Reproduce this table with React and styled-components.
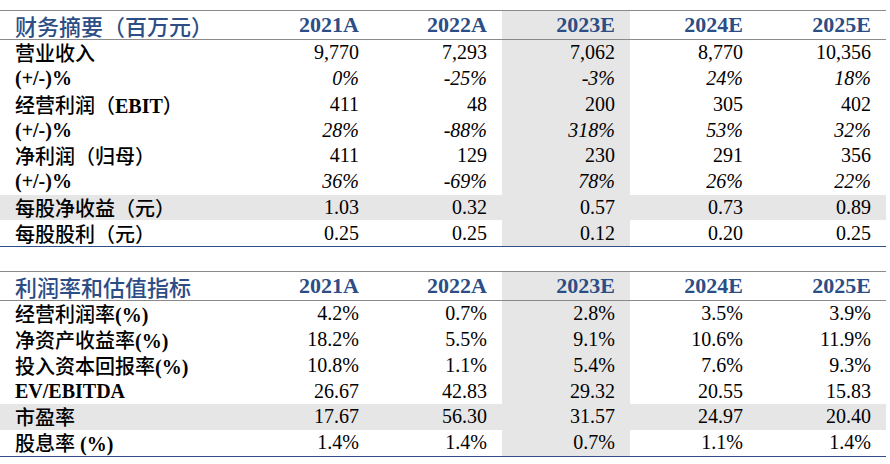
import React from 'react';
import styled, { createGlobalStyle } from 'styled-components';

const GlobalStyle = createGlobalStyle`
  body {
    margin: 0;
    background: #fff;
    font-family: "Liberation Serif", "Noto Sans CJK SC", serif;
  }
`;

const Page = styled.div`
  width: 890px;
  height: 464px;
  padding-top: 10px;
  box-sizing: border-box;
  display: flex;
  flex-direction: column;
  gap: 24px;
`;

const Table = styled.div`
  width: 886px;
  display: grid;
  grid-template-columns: 246px repeat(5, 128px);
  border-top: 1.5px solid #8a8a8a;
  border-bottom: 1.5px solid #2f4f86;
`;

const HeadCell = styled.div`
  height: 28px;
  border-bottom: 1.5px solid #8a8a8a;
  display: flex;
  align-items: center;
  justify-content: ${(p) => (p.$label ? 'flex-start' : 'flex-end')};
  padding: 0 15px;
  font-size: 22px;
  font-weight: 700;
  color: #2c4d85;
  background: ${(p) => (p.$shade ? '#e6e6e6' : 'transparent')};
  white-space: nowrap;
`;

const Cell = styled.div`
  height: 25.75px;
  display: flex;
  align-items: center;
  justify-content: ${(p) => (p.$label ? 'flex-start' : 'flex-end')};
  padding: 0 15px;
  font-size: 20px;
  font-weight: ${(p) => (p.$label ? 700 : 400)};
  font-style: ${(p) => (p.$italic ? 'italic' : 'normal')};
  color: #000;
  background: ${(p) => (p.$shade ? '#e6e6e6' : 'transparent')};
  white-space: pre;
`;

// Chinese glyphs in the source are a lighter song face, so they get a softer weight
const Han = styled.span`
  font-weight: 500;
`;

const cjk = /([\u3000-\u9fff\uff00-\uffef]+)/;

function Label({ text }) {
  return (
    <span>
      {text.split(cjk).map((part, i) =>
        cjk.test(part) ? <Han key={i}>{part}</Han> : <React.Fragment key={i}>{part}</React.Fragment>
      )}
    </span>
  );
}

const years = ['2021A', '2022A', '2023E', '2024E', '2025E'];

const summary = [
  { label: '营业收入', values: ['9,770', '7,293', '7,062', '8,770', '10,356'] },
  { label: '(+/-)%', values: ['0%', '-25%', '-3%', '24%', '18%'], italic: true },
  { label: '经营利润（EBIT）', values: ['411', '48', '200', '305', '402'] },
  { label: '(+/-)%', values: ['28%', '-88%', '318%', '53%', '32%'], italic: true },
  { label: '净利润（归母）', values: ['411', '129', '230', '291', '356'] },
  { label: '(+/-)%', values: ['36%', '-69%', '78%', '26%', '22%'], italic: true },
  { label: '每股净收益（元）', values: ['1.03', '0.32', '0.57', '0.73', '0.89'], shade: true },
  { label: '每股股利（元）', values: ['0.25', '0.25', '0.12', '0.20', '0.25'] },
];

const ratios = [
  { label: '经营利润率(%)', values: ['4.2%', '0.7%', '2.8%', '3.5%', '3.9%'] },
  { label: '净资产收益率(%)', values: ['18.2%', '5.5%', '9.1%', '10.6%', '11.9%'] },
  { label: '投入资本回报率(%)', values: ['10.8%', '1.1%', '5.4%', '7.6%', '9.3%'] },
  { label: 'EV/EBITDA', values: ['26.67', '42.83', '29.32', '20.55', '15.83'] },
  { label: '市盈率', values: ['17.67', '56.30', '31.57', '24.97', '20.40'], shade: true },
  { label: '股息率 (%)', values: ['1.4%', '1.4%', '0.7%', '1.1%', '1.4%'] },
];

function DataTable({ title, rows }) {
  return (
    <Table>
      <HeadCell $label><Label text={title} /></HeadCell>
      {years.map((y, i) => (
        <HeadCell key={y} $shade={i === 2}>{y}</HeadCell>
      ))}
      {rows.map((row, r) => (
        <React.Fragment key={r}>
          <Cell $label $shade={row.shade}><Label text={row.label} /></Cell>
          {row.values.map((v, i) => (
            <Cell key={i} $italic={row.italic} $shade={row.shade || i === 2}>
              {v}
            </Cell>
          ))}
        </React.Fragment>
      ))}
    </Table>
  );
}

export default function App() {
  return (
    <>
      <GlobalStyle />
      <Page>
        <DataTable title="财务摘要（百万元）" rows={summary} />
        <DataTable title="利润率和估值指标" rows={ratios} />
      </Page>
    </>
  );
}
